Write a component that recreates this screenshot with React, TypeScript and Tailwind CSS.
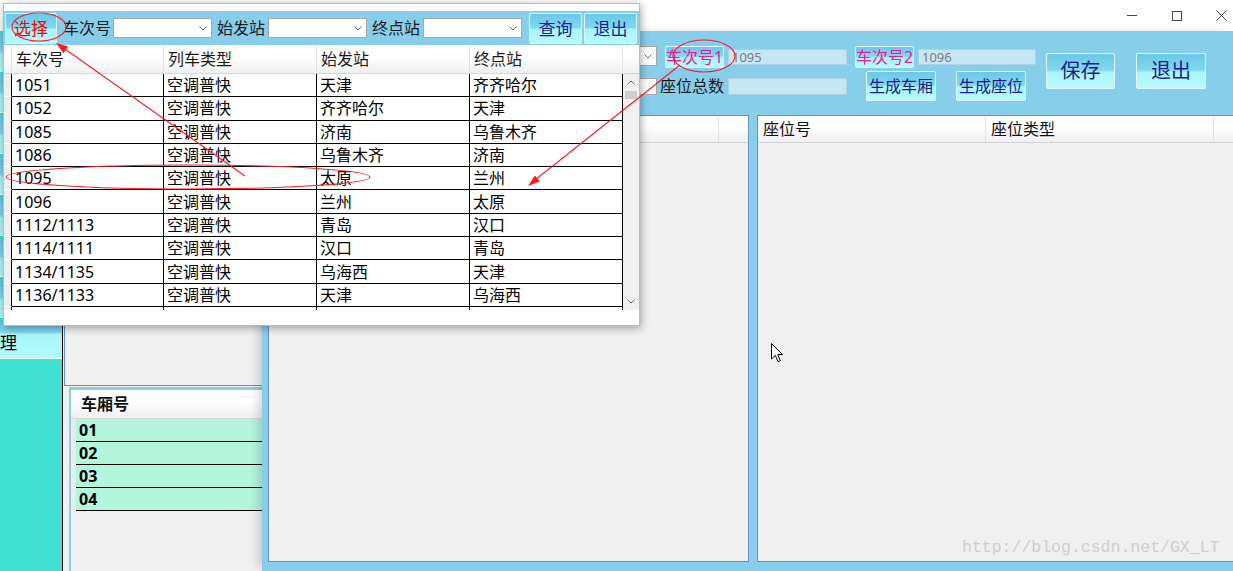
import React from 'react';

const trains = [
  ['1051', '空调普快', '天津', '齐齐哈尔'],
  ['1052', '空调普快', '齐齐哈尔', '天津'],
  ['1085', '空调普快', '济南', '乌鲁木齐'],
  ['1086', '空调普快', '乌鲁木齐', '济南'],
  ['1095', '空调普快', '太原', '兰州'],
  ['1096', '空调普快', '兰州', '太原'],
  ['1112/1113', '空调普快', '青岛', '汉口'],
  ['1114/1111', '空调普快', '汉口', '青岛'],
  ['1134/1135', '空调普快', '乌海西', '天津'],
  ['1136/1133', '空调普快', '天津', '乌海西'],
  ['', '', '', ''],
];

const colWidths = ['w-[152px]', 'w-[153px]', 'w-[153px]', 'w-[153px]'];
const headers = ['车次号', '列车类型', '始发站', '终点站'];

// gradient used by every button on both forms
const skyBtn =
  'flex items-center justify-center whitespace-nowrap border border-[#e4fbff] rounded-[2px] bg-[linear-gradient(to_bottom,#6ac9e8_0%,#80d6ef_46%,#a9f6fb_54%,#b4fbfd_100%)] leading-none';

function Chevron({ up = false }: { up?: boolean }) {
  return (
    <svg width="8" height="5" viewBox="0 0 8 5" className="shrink-0">
      <path d={up ? 'M0.5 4.5 L4 1 L7.5 4.5' : 'M0.5 0.5 L4 4 L7.5 0.5'} fill="none" stroke="#6a6a6a" strokeWidth="1" />
    </svg>
  );
}

function Combo({ className }: { className: string }) {
  return (
    <div className={`flex items-center justify-end pr-[4px] bg-white border border-[#a8a8a8] ${className}`}>
      <Chevron />
    </div>
  );
}

function TextBox({ value, className }: { value?: string; className: string }) {
  return (
    <div className={`flex items-center pl-[3px] bg-[#c6e6f4] border border-[#acd2e5] text-[13px] text-[#7c7c7c] leading-none ${className}`}>
      {value}
    </div>
  );
}

function TrainPicker() {
  return (
    <div className="absolute z-20 left-[3px] top-[3px] w-[637px] h-[323px] flex flex-col bg-white border border-[#bcbcbc] shadow-[1px_2px_8px_rgba(0,0,0,0.35)]">
      <div className="h-[7px] shrink-0" />
      <div className="h-[34px] shrink-0 flex items-center pl-[1px] bg-[#87ceeb] text-[16px] text-[#1a1a1a] leading-none whitespace-nowrap">
        <div className={`${skyBtn} w-[52px] h-[31px] text-[17px] text-[#ff0000]`}>选择</div>
        <span className="ml-[6px]">车次号</span>
        <Combo className="ml-[2px] w-[99px] h-[20px]" />
        <span className="ml-[5px]">始发站</span>
        <Combo className="ml-[3px] w-[99px] h-[20px]" />
        <span className="ml-[5px]">终点站</span>
        <Combo className="ml-[3px] w-[99px] h-[20px]" />
        <div className={`${skyBtn} ml-[7px] w-[53px] h-[31px] text-[17px] text-[#1c1c8e]`}>查询</div>
        <div className={`${skyBtn} ml-[2px] w-[53px] h-[31px] text-[17px] text-[#1c1c8e]`}>退出</div>
      </div>

      {/* header */}
      <div className="h-[29px] shrink-0 flex border-b border-[#d6d6d6] bg-[linear-gradient(to_bottom,#ffffff_0%,#ffffff_40%,#eff0f2_100%)] text-[16px] text-[#1a1a1a] leading-none">
        <div className="w-[8px] border-r border-[#e2e2e2]" />
        {headers.map((h, i) => (
          <div key={h} className={`${colWidths[i]} flex items-center pl-[4px] border-r border-[#e2e2e2]`}>
            {h}
          </div>
        ))}
      </div>

      {/* rows + scroll bar */}
      <div className="h-[236px] shrink-0 flex overflow-hidden">
        <div className="flex flex-col">
          {trains.map((r, i) => (
            <div key={i} className="h-[23.3px] shrink-0 flex text-[16px] text-black leading-none">
              <div className="w-[8px] bg-[#eeeeee] border-r border-black border-b border-b-white" />
              {r.map((c, j) => (
                <div key={j} className={`${colWidths[j]} flex items-center pl-[3px] border-r border-b border-black`}>
                  {c}
                </div>
              ))}
            </div>
          ))}
        </div>
        <div className="w-[16px] flex flex-col items-center bg-[#f0f0f0]">
          <div className="h-[17px] flex items-center">
            <Chevron up />
          </div>
          <div className="h-[8px] w-[12px] bg-[#cdcdcd]" />
          <div className="flex-1" />
          <div className="h-[17px] flex items-center">
            <Chevron />
          </div>
        </div>
      </div>
      <div className="flex-1" />
    </div>
  );
}

function Sidebar() {
  return (
    <div className="w-[62px] shrink-0 flex flex-col pt-[3px] bg-[#40e0d0]">
      {[0, 1, 2, 3, 4, 5, 6].map((i) => (
        <div key={i} className={`${skyBtn} h-[38px] mb-[3px] rounded-none border-0 border-b border-b-white`} />
      ))}
      <div className="h-[38px] flex items-center pt-[6px] border-b border-white bg-[linear-gradient(to_bottom,#6ac9e8_0%,#80d6ef_30%,#a9f6fb_36%,#b0fcfc_100%)] text-[17px] text-black leading-none">
        理
      </div>
    </div>
  );
}

function Middle() {
  return (
    <div className="w-[200px] shrink-0 flex flex-col pl-[1px] border-l border-black bg-[#f0f0f0]">
      <div className="h-[355px] shrink-0 border-l border-b border-[#6c8fbc]" />
      <div className="flex-1 mt-[1px] ml-[5px] flex flex-col border-l-2 border-t-[3px] border-[#8ccde6]">
        <div className="h-[29px] shrink-0 flex items-center pl-[10px] border-b border-[#d8d8d8] bg-[linear-gradient(to_bottom,#ffffff_0%,#ffffff_40%,#eff0f2_100%)] text-[16px] font-bold text-[#111] leading-none">
          车厢号
        </div>
        {['01', '02', '03', '04'].map((n) => (
          <div key={n} className="h-[23px] shrink-0 flex">
            <div className="w-[5px] bg-[#ebebeb] border-b border-white" />
            <div className="flex-1 flex items-center pl-[3px] bg-[#b4f5dd] border-b border-black text-[16px] font-bold text-black leading-none">
              {n}
            </div>
          </div>
        ))}
      </div>
    </div>
  );
}

function MainArea() {
  return (
    <div className="relative z-10 flex-1 flex flex-col bg-[#87ceeb] shadow-[-6px_0_10px_-3px_rgba(0,0,0,0.18)] overflow-hidden">
      <div className="h-[84px] shrink-0 flex items-start pl-[298px] leading-none whitespace-nowrap">
        <div className="w-[97px] shrink-0 flex flex-col pt-[15px]">
          <Combo className="h-[20px]" />
          <div className="mt-[12px] h-[17px] bg-white border border-[#a8a8a8]" />
        </div>
        <div className="ml-[3px] w-[187px] shrink-0 flex flex-col pt-[15px]">
          <div className="h-[22px] flex items-center">
            <div className={`${skyBtn} ml-[5px] w-[59px] h-[22px] text-[16px] text-[#f5169a]`}>车次号1</div>
            <TextBox value="1095" className="ml-[4px] w-[119px] h-[16px]" />
          </div>
          <div className="mt-[7px] h-[22px] flex items-center">
            <span className="w-[68px] text-[16px] text-[#1a1a1a]">座位总数</span>
            <TextBox className="w-[119px] h-[17px]" />
          </div>
        </div>
        <div className="ml-[8px] w-[181px] shrink-0 flex flex-col pt-[15px]">
          <div className="h-[22px] flex items-center">
            <div className={`${skyBtn} w-[59px] h-[22px] text-[16px] text-[#f5169a]`}>车次号2</div>
            <TextBox value="1096" className="ml-[4px] w-[118px] h-[16px]" />
          </div>
          <div className="mt-[3px] flex pl-[11px] gap-[20px]">
            <div className={`${skyBtn} w-[70px] h-[30px] text-[16px] text-[#1c1c8e]`}>生成车厢</div>
            <div className={`${skyBtn} w-[70px] h-[30px] text-[16px] text-[#1c1c8e]`}>生成座位</div>
          </div>
        </div>
        <div className={`${skyBtn} ml-[10px] mt-[22px] w-[69px] h-[36px] text-[20px] text-[#1c1c8e]`}>保存</div>
        <div className={`${skyBtn} ml-[21px] mt-[22px] w-[70px] h-[36px] text-[20px] text-[#1c1c8e]`}>退出</div>
      </div>

      <div className="flex-1 flex pl-[6px] pb-[9px] gap-[8px]">
        <div className="w-[481px] shrink-0 flex flex-col border border-[#6c8fbc] bg-[#f0f0f0]">
          <div className="h-[27px] flex border-b border-[#d4d4d4] bg-[linear-gradient(to_bottom,#ffffff_0%,#ffffff_40%,#eff0f3_100%)]">
            <div className="w-[223px] border-r border-[#e2e2e2]" />
            <div className="w-[227px] border-r border-[#e2e2e2]" />
          </div>
        </div>
        <div className="w-[490px] shrink-0 flex flex-col border border-[#6c8fbc] bg-[#f0f0f0]">
          <div className="h-[27px] flex border-b border-[#d4d4d4] bg-[linear-gradient(to_bottom,#ffffff_0%,#ffffff_40%,#eff0f3_100%)] text-[16px] text-[#111] leading-none">
            <div className="w-[228px] flex items-center pl-[5px] border-r border-[#e2e2e2]">座位号</div>
            <div className="w-[228px] flex items-center pl-[5px] border-r border-[#e2e2e2]">座位类型</div>
          </div>
        </div>
      </div>
    </div>
  );
}

function Annotations() {
  return (
    <svg className="absolute z-30 left-0 top-0 pointer-events-none" width="1233" height="571" viewBox="0 0 1233 571">
      <g fill="none" stroke="#ff1a1a" strokeWidth="1.1">
        <ellipse cx="39" cy="27" rx="27" ry="14" />
        <ellipse cx="188" cy="177" rx="182" ry="12" />
        <ellipse cx="704" cy="56" rx="31" ry="16" />
        <line x1="245" y1="176" x2="62" y2="47" />
        <line x1="680" y1="65" x2="535" y2="180" />
      </g>
      <g fill="#ff1a1a">
        <polygon points="56,43 68.1,46.6 63.5,53.2" />
        <polygon points="528,186 539.9,181.6 534.9,175.4" />
      </g>
    </svg>
  );
}

export default function App() {
  return (
    <div className="relative w-[1233px] h-[571px] overflow-hidden bg-white font-['Noto_Sans','Noto_Sans_CJK_SC',sans-serif]">
      {/* title bar */}
      <div className="h-[31px] flex justify-end items-center -mr-[11px]">
        <div className="w-[45px] flex justify-center">
          <div className="w-[10px] h-[1px] bg-[#444]" />
        </div>
        <div className="w-[45px] flex justify-center">
          <div className="w-[10px] h-[10px] border border-[#444]" />
        </div>
        <div className="w-[45px] flex justify-center">
          <svg width="11" height="11" viewBox="0 0 11 11">
            <path d="M0.5 0.5 L10.5 10.5 M10.5 0.5 L0.5 10.5" stroke="#444" strokeWidth="1" />
          </svg>
        </div>
      </div>

      <div className="h-[540px] flex">
        <Sidebar />
        <Middle />
        <MainArea />
      </div>

      <TrainPicker />
      <Annotations />

      <div className="absolute z-30 left-[962px] top-[540px] text-[16.5px] leading-none text-[#cfcfcb] font-['Liberation_Mono',monospace]">
        http://blog.csdn.net/GX_LT
      </div>

      <svg className="absolute z-30 left-[771px] top-[343px]" width="13" height="20" viewBox="0 0 13 20">
        <path d="M0.5 0.5 L0.5 16 L4.3 12.4 L7 18.6 L9.3 17.6 L6.7 11.6 L11.6 11.6 Z" fill="#fff" stroke="#000" strokeWidth="1" />
      </svg>
    </div>
  );
}
